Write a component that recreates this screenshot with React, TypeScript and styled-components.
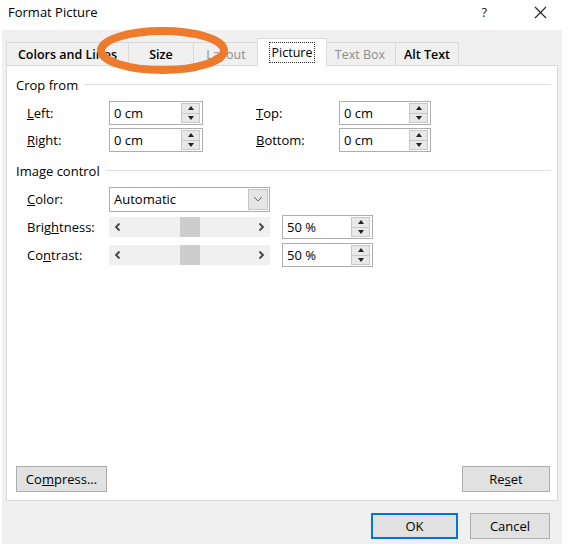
import styled, { createGlobalStyle } from "styled-components"

const GlobalStyle = createGlobalStyle`
    html, body {
        margin: 0;
        padding: 0;
        background: #ffffff;
    }
    body {
        font-family: "Open Sans", "Noto Sans", sans-serif;
        font-size: 13px;
        color: #000;
    }
`

type SpinProps = { value: string; width: number }

const SpinField = ({ value, width }: SpinProps) => (
    <Field $w={width}>
        <FieldText>{value}</FieldText>
        <Spinner>
            <SpinBtn>
                <Tri $up />
            </SpinBtn>
            <SpinBtn>
                <Tri />
            </SpinBtn>
        </Spinner>
    </Field>
)

const ScrollBar = () => (
    <Track>
        <Arrow>
            <svg width="7" height="10" viewBox="0 0 7 10">
                <polyline points="5.5,1.5 2,5 5.5,8.5" fill="none" stroke="#444" strokeWidth="1.8" />
            </svg>
        </Arrow>
        <Lane>
            <Thumb />
        </Lane>
        <Arrow>
            <svg width="7" height="10" viewBox="0 0 7 10">
                <polyline points="1.5,1.5 5,5 1.5,8.5" fill="none" stroke="#444" strokeWidth="1.8" />
            </svg>
        </Arrow>
    </Track>
)

// tab widths follow the dialog's own sizing
const tabs = [
    { label: "Colors and Lines", state: "normal", width: 123 },
    { label: "Size", state: "normal", width: 66 },
    { label: "Layout", state: "disabled", width: 66 },
    { label: "Picture", state: "active", width: 70 },
    { label: "Text Box", state: "disabled", width: 72 },
    { label: "Alt Text", state: "normal", width: 64 }
] as const

export default function App() {
    return (
        <>
            <GlobalStyle />
            <Window>
                <TitleBar>
                    <Title>Format Picture</Title>
                    <TitleButtons>
                        <Help>?</Help>
                        <svg width="13" height="13" viewBox="0 0 13 13">
                            <path d="M1 1 L12 12 M12 1 L1 12" stroke="#222" strokeWidth="1.1" />
                        </svg>
                    </TitleButtons>
                </TitleBar>
                <Body>
                    <TabStrip>
                        {tabs.map((t) => (
                            <Tab key={t.label} $state={t.state} $w={t.width}>
                                {t.state === "active" ? <Focus>{t.label}</Focus> : t.label}
                            </Tab>
                        ))}
                    </TabStrip>
                    <Page>
                        <GroupHeader>Crop from</GroupHeader>
                        <CropGrid>
                            <Label>
                                <u>L</u>eft:
                            </Label>
                            <SpinField value="0 cm" width={94} />
                            <span />
                            <Label>
                                <u>T</u>op:
                            </Label>
                            <SpinField value="0 cm" width={92} />
                            <Label>
                                <u>R</u>ight:
                            </Label>
                            <SpinField value="0 cm" width={94} />
                            <span />
                            <Label>
                                <u>B</u>ottom:
                            </Label>
                            <SpinField value="0 cm" width={92} />
                        </CropGrid>
                        <GroupHeader $top={10}>Image control</GroupHeader>
                        <ImageGrid>
                            <Label>
                                <u>C</u>olor:
                            </Label>
                            <Select>
                                <FieldText>Automatic</FieldText>
                                <DropBtn>
                                    <svg width="10" height="6" viewBox="0 0 10 6">
                                        <polyline points="1,1 5,5 9,1" fill="none" stroke="#666" strokeWidth="1" />
                                    </svg>
                                </DropBtn>
                            </Select>
                            <span />
                            <span />
                            <Label>
                                Brig<u>h</u>tness:
                            </Label>
                            <ScrollBar />
                            <span />
                            <SpinField value="50 %" width={91} />
                            <Label>
                                Co<u>n</u>trast:
                            </Label>
                            <ScrollBar />
                            <span />
                            <SpinField value="50 %" width={91} />
                        </ImageGrid>
                        <Spacer />
                        <PageButtons>
                            <Button $w={91}>
                                Co<u>m</u>press...
                            </Button>
                            <Button $w={88}>
                                Re<u>s</u>et
                            </Button>
                        </PageButtons>
                    </Page>
                    <Footer>
                        <Button $w={87} $primary>
                            OK
                        </Button>
                        <Button $w={80}>Cancel</Button>
                    </Footer>
                </Body>
                <Marker width="133" height="50" viewBox="0 0 133 50">
                    <ellipse cx="66.5" cy="24.5" rx="61.5" ry="19.5" fill="none" stroke="#ee7a2c" strokeWidth="8" />
                </Marker>
            </Window>
        </>
    )
}

const Window = styled.div`
    position: relative;
    width: 571px;
    height: 552px;
    display: flex;
    flex-direction: column;
    background: #fff;
    overflow: hidden;
`

const TitleBar = styled.div`
    height: 30px;
    display: flex;
    align-items: flex-start;
    justify-content: space-between;
    padding: 3px 0 0 8px;
    box-sizing: border-box;
`

const Title = styled.div`
    font-size: 13px;
    line-height: 18px;
`

const TitleButtons = styled.div`
    display: flex;
    align-items: center;
    height: 18px;
    padding-right: 24px;
    gap: 47px;
`

const Help = styled.span`
    font-size: 13px;
    line-height: 18px;
    color: #222;
`

const Body = styled.div`
    flex: 1;
    margin: 0 9px 8px 2px;
    background: #f0f0f0;
    display: flex;
    flex-direction: column;
    padding: 11px 4px 0 4px;
`

const TabStrip = styled.div`
    display: flex;
    align-items: flex-end;
    height: 25px;
    position: relative;
    z-index: 1;
    margin-bottom: -1px;
    padding-left: 1px;
`

const Tab = styled.div<{ $state: "normal" | "disabled" | "active"; $w: number }>`
    width: ${({ $w }) => $w}px;
    height: ${({ $state }) => ($state === "active" ? "28px" : "24px")};
    box-sizing: border-box;
    display: flex;
    align-items: center;
    justify-content: center;
    border: 1px solid #d9d9d9;
    border-bottom: ${({ $state }) => ($state === "active" ? "none" : "1px solid #d9d9d9")};
    margin: ${({ $state }) => ($state === "active" ? "0 -2px" : "0 0 0 -1px")};
    background: ${({ $state }) => ($state === "active" ? "#fff" : "#f0f0f0")};
    color: ${({ $state }) => ($state === "disabled" ? "#8d8d8d" : "#000")};
    font-size: 12.5px;
    font-weight: ${({ $state }) => ($state === "normal" ? 600 : 400)};
    position: relative;
    z-index: ${({ $state }) => ($state === "active" ? 2 : 1)};
    white-space: nowrap;
`

const Focus = styled.span`
    outline: 1px dotted #333;
    outline-offset: 1px;
    padding: 0 1px;
    line-height: 17px;
`

const Page = styled.div`
    flex: 1;
    background: #fff;
    border: 1px solid #d9d9d9;
    display: flex;
    flex-direction: column;
    padding: 10px 6px 8px 9px;
`

const GroupHeader = styled.div<{ $top?: number }>`
    display: flex;
    align-items: center;
    gap: 6px;
    height: 17px;
    margin-top: ${({ $top }) => $top ?? 0}px;

    &::after {
        content: "";
        flex: 1;
        height: 1px;
        background: #e0e0e0;
    }
`

const CropGrid = styled.div`
    display: grid;
    grid-template-columns: 82px 94px 53px 83px 92px;
    grid-auto-rows: 24px;
    row-gap: 3px;
    align-items: center;
    margin: 8px 0 0 11px;
`

const ImageGrid = styled.div`
    display: grid;
    grid-template-columns: 82px 161px 12px 91px;
    grid-auto-rows: 24px;
    row-gap: 4px;
    align-items: center;
    margin: 8px 0 0 11px;
`

const Label = styled.div`
    white-space: nowrap;
`

const Field = styled.div<{ $w: number }>`
    width: ${({ $w }) => $w}px;
    height: 24px;
    box-sizing: border-box;
    border: 1px solid #adadad;
    background: #fff;
    display: flex;
    padding: 1px;
`

const FieldText = styled.div`
    flex: 1;
    display: flex;
    align-items: center;
    padding-left: 3px;
`

const Spinner = styled.div`
    width: 17px;
    display: flex;
    flex-direction: column;
    border: 1px solid #c8c8c8;
    background: #e8e8e8;
    margin-right: 1px;
`

const SpinBtn = styled.div`
    flex: 1;
    display: flex;
    align-items: center;
    justify-content: center;

    & + & {
        border-top: 1px solid #c8c8c8;
    }
`

const Tri = styled.div<{ $up?: boolean }>`
    width: 0;
    height: 0;
    border-left: 3px solid transparent;
    border-right: 3px solid transparent;
    border-${({ $up }) => ($up ? "bottom" : "top")}: 4px solid #222;
`

const Select = styled.div`
    width: 161px;
    height: 25px;
    box-sizing: border-box;
    border: 1px solid #adadad;
    background: #fff;
    display: flex;
    padding: 1px;
`

const DropBtn = styled.div`
    width: 18px;
    display: flex;
    align-items: center;
    justify-content: center;
    background: #e5e5e5;
    border: 1px solid #c4c4c4;
`

const Track = styled.div`
    height: 20px;
    background: #f0f0f0;
    display: flex;
`

const Arrow = styled.div`
    width: 17px;
    display: flex;
    align-items: center;
    justify-content: center;
`

const Lane = styled.div`
    flex: 1;
    display: flex;
    justify-content: center;
`

const Thumb = styled.div`
    width: 20px;
    background: #cdcdcd;
`

const Spacer = styled.div`
    flex: 1;
`

const PageButtons = styled.div`
    display: flex;
    justify-content: space-between;
    padding-right: 1px;
`

const Button = styled.div<{ $w: number; $primary?: boolean }>`
    width: ${({ $w }) => $w}px;
    height: 26px;
    box-sizing: border-box;
    display: flex;
    align-items: center;
    justify-content: center;
    background: #e1e1e1;
    border: ${({ $primary }) => ($primary ? "2px solid #0078d7" : "1px solid #adadad")};
`

const Footer = styled.div`
    height: 43px;
    display: flex;
    justify-content: flex-end;
    align-items: flex-start;
    gap: 12px;
    padding: 12px 8px 0 0;
    box-sizing: border-box;
`

const Marker = styled.svg`
    position: absolute;
    left: 96px;
    top: 26px;
    z-index: 5;
    pointer-events: none;
`
